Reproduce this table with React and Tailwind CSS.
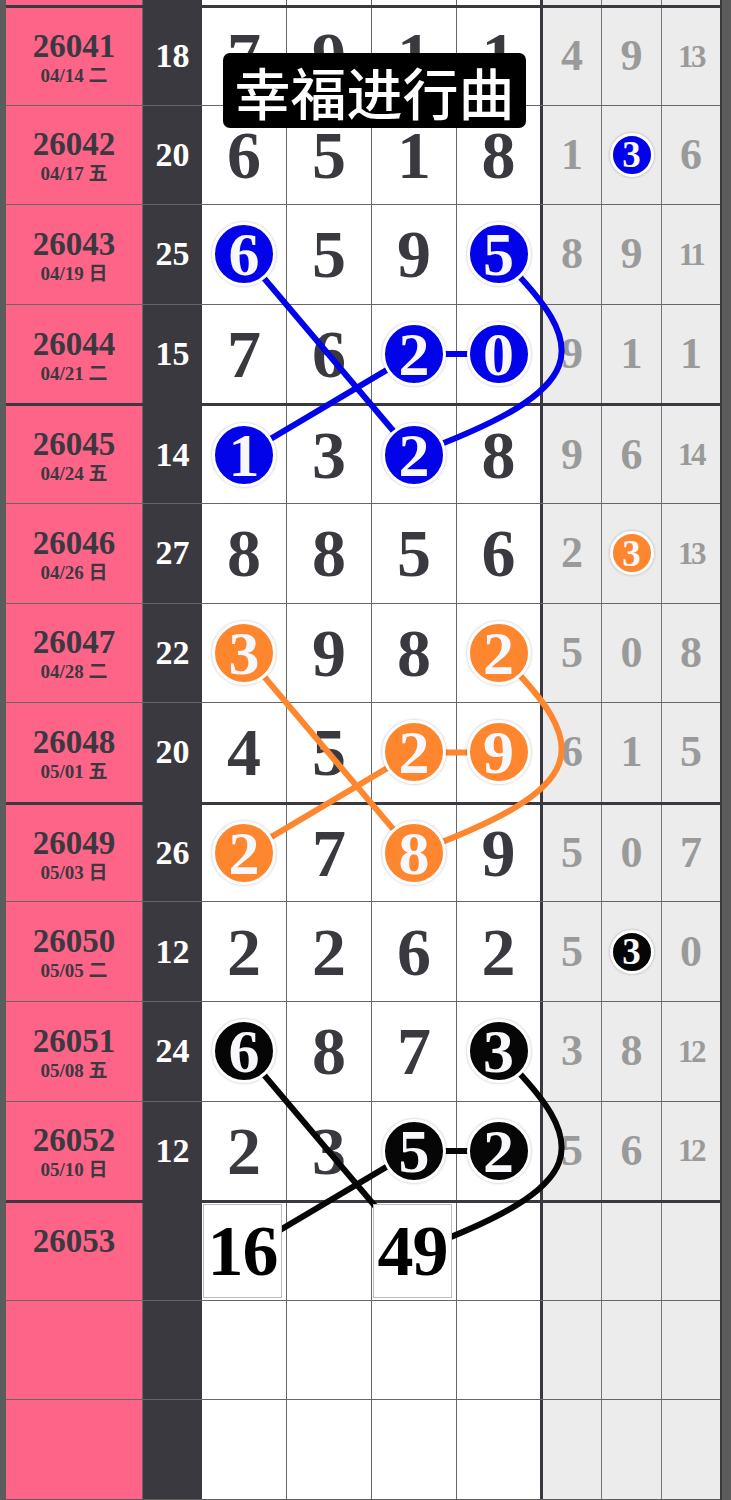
import React from 'react';

const serif = "font-['Liberation_Serif','Noto_Sans_CJK_SC',serif] font-bold";

// marks: index of number cell -> colour key
const rows = [
  { id: '26041', date: '04/14 二', sum: 18, n: [7, 9, 1, 1], g: [4, 9, 13] },
  { id: '26042', date: '04/17 五', sum: 20, n: [6, 5, 1, 8], g: [1, 3, 6], gm: 'blue' },
  { id: '26043', date: '04/19 日', sum: 25, n: [6, 5, 9, 5], g: [8, 9, 11], m: { 0: 'blue', 3: 'blue' } },
  { id: '26044', date: '04/21 二', sum: 15, n: [7, 6, 2, 0], g: [9, 1, 1], m: { 2: 'blue', 3: 'blue' } },
  { id: '26045', date: '04/24 五', sum: 14, n: [1, 3, 2, 8], g: [9, 6, 14], m: { 0: 'blue', 2: 'blue' } },
  { id: '26046', date: '04/26 日', sum: 27, n: [8, 8, 5, 6], g: [2, 3, 13], gm: 'orange' },
  { id: '26047', date: '04/28 二', sum: 22, n: [3, 9, 8, 2], g: [5, 0, 8], m: { 0: 'orange', 3: 'orange' } },
  { id: '26048', date: '05/01 五', sum: 20, n: [4, 5, 2, 9], g: [6, 1, 5], m: { 2: 'orange', 3: 'orange' } },
  { id: '26049', date: '05/03 日', sum: 26, n: [2, 7, 8, 9], g: [5, 0, 7], m: { 0: 'orange', 2: 'orange' } },
  { id: '26050', date: '05/05 二', sum: 12, n: [2, 2, 6, 2], g: [5, 3, 0], gm: 'black' },
  { id: '26051', date: '05/08 五', sum: 24, n: [6, 8, 7, 3], g: [3, 8, 12], m: { 0: 'black', 3: 'black' } },
  { id: '26052', date: '05/10 日', sum: 12, n: [2, 3, 5, 2], g: [5, 6, 12], m: { 2: 'black', 3: 'black' } },
  { id: '26053', date: '', sum: '', n: ['', '', '', ''], g: ['', '', ''], box: { 0: '16', 2: '49' } },
  { id: '', date: '', sum: '', n: ['', '', '', ''], g: ['', '', ''] },
  { id: '', date: '', sum: '', n: ['', '', '', ''], g: ['', '', ''] },
];

const ballColor = {
  blue: 'bg-[#0303ea]',
  orange: 'bg-[#fd862f]',
  black: 'bg-[#060606]',
};

const numW = ['w-[84px]', 'w-[85px] border-l border-l-[#666]', 'w-[85px] border-l border-l-[#666]', 'w-[84px] border-l border-l-[#666]'];
const grayW = ['w-[61px] border-l-[3px] border-l-[#3a3940]', 'w-[60px] border-l border-l-[#777]', 'w-[59px] border-l border-l-[#777]'];

const Ball = ({ v, color, big }) => (
  <span
    className={`relative z-20 flex items-center justify-center rounded-full border-[3px] border-white shadow-[0_0_2px_1px_rgba(0,0,0,0.14)] text-[#f8f8fc] leading-none ${serif} ${ballColor[color]} ${
      big ? 'w-[64px] h-[64px] text-[62px]' : 'w-[44px] h-[44px] text-[37px]'
    }`}
  >
    {v}
  </span>
);

const Row = ({ r, i }) => {
  const thick = i % 4 === 0;
  return (
    <div className={`flex shrink-0 h-[99.6px] ${thick ? 'border-t-[3px] border-t-[#3a3940]' : 'border-t border-t-[#666]'}`}>
      <div className={`w-[137px] shrink-0 bg-[#fe6488] border-r border-r-[#666] flex flex-col items-center justify-center pt-[5px] text-[#3a3940] ${serif}`}>
        <span className="text-[33px] leading-[34px]">{r.id || '\u00a0'}</span>
        <span className="text-[19px] leading-[26px]">{r.date || '\u00a0'}</span>
      </div>
      <div className={`w-[59px] shrink-0 bg-[#3a3940] flex items-center justify-center text-white text-[34px] leading-none ${serif}`}>
        {r.sum}
      </div>
      {r.n.map((v, k) => (
        <div key={k} className={`${numW[k]} shrink-0 bg-white flex items-center justify-center text-[#3a3940] text-[68px] leading-none ${serif}`}>
          {r.m && r.m[k] ? (
            <Ball v={v} color={r.m[k]} big />
          ) : r.box && r.box[k] ? (
            <div className="relative z-20 self-stretch ml-[1px] mr-[4px] mt-[1px] mb-[2px] flex-1 bg-white border border-[#bdbdbd] flex items-center justify-center text-black text-[72px] leading-none tracking-[-1px]">
              {r.box[k]}
            </div>
          ) : (
            v
          )}
        </div>
      ))}
      {r.g.map((v, k) => (
        <div
          key={k}
          className={`${grayW[k]} shrink-0 bg-[#ececec] flex items-center justify-center text-[#9a9a9a] leading-none ${serif} ${
            v !== '' && v >= 10 ? 'text-[31px] tracking-[-2.5px]' : 'text-[44px]'
          }`}
        >
          {k === 1 && r.gm ? <Ball v={v} color={r.gm} /> : v}
        </div>
      ))}
    </div>
  );
};

const Strip = () => (
  <div className="flex shrink-0 h-[5px]">
    <div className="w-[137px] shrink-0 bg-[#fe6488] border-r border-r-[#666]" />
    <div className="w-[59px] shrink-0 bg-[#3a3940]" />
    {numW.map((c, k) => (
      <div key={k} className={`${c} shrink-0 bg-white`} />
    ))}
    {grayW.map((c, k) => (
      <div key={k} className={`${c} shrink-0 bg-[#ececec]`} />
    ))}
  </div>
);

// connector lines, page coordinates
const C1 = 244, C3 = 413.5, C4 = 498;
const groups = [
  { color: '#0303ea', y: [254.5, 354.1, 454.7] },
  { color: '#fd862f', y: [652.9, 752.5, 853.1] },
  { color: '#060606', y: [1051.3, 1150.9, 1251.5] },
];

const Lines = () => (
  <svg className="absolute left-0 top-0 z-10 pointer-events-none" width="731" height="1500" viewBox="0 0 731 1500">
    {groups.map(({ color, y }, k) => {
      const [a, b, c] = y;
      return (
        <g key={k} stroke={color} strokeWidth="6" fill="none" strokeLinecap="butt">
          <line x1={C1} y1={a} x2={C3} y2={c} />
          <line x1={C3} y1={b} x2={C1} y2={c} />
          <line x1={C3} y1={b} x2={C4} y2={b} />
          <path d={`M ${C4} ${a} C 595 ${a + 95} 592 ${a + 134} ${C3} ${c}`} />
        </g>
      );
    })}
  </svg>
);

export default function App() {
  return (
    <div className="relative w-[731px] h-[1500px] overflow-hidden bg-[#5c5c5c] flex">
      <div className="w-[6px] shrink-0" />
      <div className="w-[714px] shrink-0 flex flex-col">
        <Strip />
        {rows.map((r, i) => (
          <Row key={i} r={r} i={i} />
        ))}
      </div>
      <div className="w-[11px] shrink-0 border-l-2 border-l-[#3a3940]" />
      <Lines />
      <div className="absolute left-[223px] top-[53px] z-30 w-[303px] h-[75px] rounded-[7px] bg-black flex items-center justify-center text-white text-[56px] leading-none font-medium font-['Noto_Sans_CJK_SC',sans-serif]">
        幸福进行曲
      </div>
    </div>
  );
}
